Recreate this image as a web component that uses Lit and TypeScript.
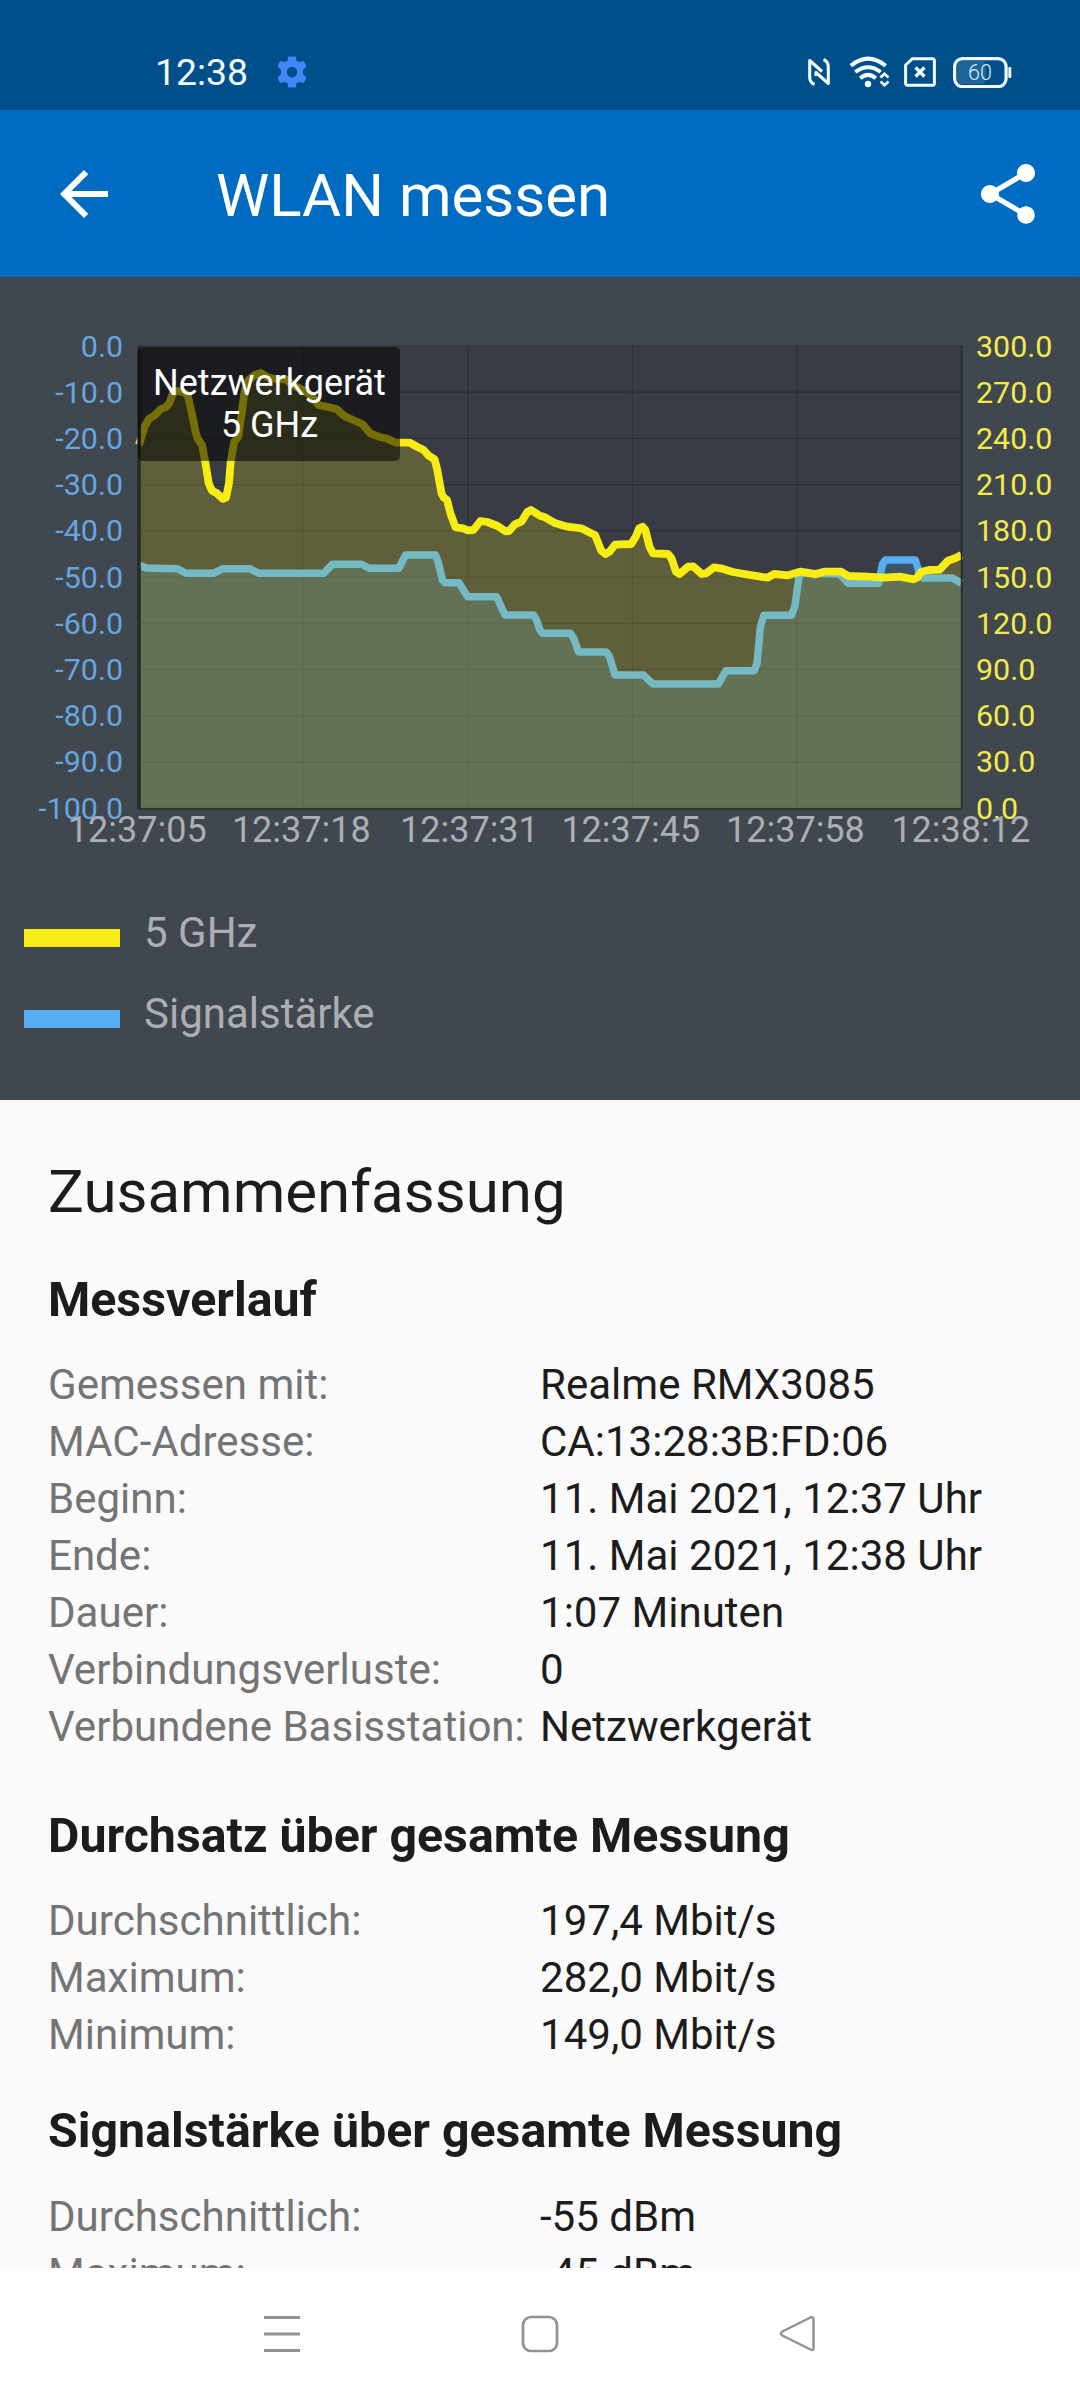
import { LitElement, html, svg, css } from "lit";
import { customElement, property } from "lit/decorators.js";

type Point = [number, number];

// Plot area inside the chart canvas (canvas starts below the app bar).
const PLOT = { left: 138, right: 962, top: 346, bottom: 808 };
const CANVAS = { top: 277, width: 1080, height: 623 };

const THROUGHPUT: Point[] = [
  [139, 445], [144.6, 426.7], [148.8, 419], [155, 415], [161, 409], [166, 407], [169.4, 403], [173, 393],
  [177, 391], [182.5, 391.7], [187.7, 395], [191.8, 413], [195.6, 431.7], [197.3, 438], [202, 445],
  [205.2, 461.7], [208.7, 483.3], [212, 490.7], [217, 493.3], [223, 499], [226, 497.7], [229, 483],
  [230.7, 461.7], [234.2, 441.7], [238.3, 436.7], [241.7, 413], [244.5, 391.7], [248.6, 380], [254.8, 375],
  [260.7, 373], [268.6, 377.7], [275.5, 379], [285.8, 379.3], [292.7, 385], [303, 390], [311.6, 395.7],
  [318.5, 405], [327, 406.7], [336.8, 409.3], [344.4, 416], [353, 420], [362.3, 424], [370.2, 433.3],
  [378.8, 436.7], [387.4, 438.7], [396, 442.7], [409.8, 442.7], [415.6, 446], [423.6, 450], [428.7, 455.7],
  [434.6, 459.3], [437.3, 470], [441.5, 493.3], [443.5, 497.3], [447, 500], [450.4, 513.3], [455.6, 527.3],
  [463.2, 528.3], [467.3, 530.3], [473.5, 530], [480.4, 521], [487.3, 522], [497.6, 526], [505.5, 531.3],
  [509, 531], [514.8, 524.3], [521.7, 521.3], [527.5, 511.7], [531, 510], [540, 515.7], [545, 517.3],
  [555.5, 523.3], [567.5, 526.7], [581.3, 528.3], [590, 532.7], [595, 535], [601.3, 550.7], [605.4, 554],
  [609.6, 551.7], [615, 544.7], [631.3, 544], [635.7, 536.7], [639.2, 528.3], [642.6, 526.7], [645.4, 530],
  [649.5, 546.7], [653, 553.3], [668, 554], [671.5, 558.3], [676, 571.7], [679.5, 574], [688, 566.7],
  [693.2, 566.3], [701.8, 574], [706, 573.3], [714, 567.3], [720.8, 568.3], [732.8, 572], [746.6, 574.3],
  [760.4, 576.7], [767.3, 577.7], [774.2, 574], [788, 575.3], [800, 571.7], [807, 572.7], [815.5, 574.3],
  [824, 571.7], [841.3, 571.7], [848.2, 576], [867, 576.7], [884.4, 577.7], [899.9, 576.7], [913.6, 579.3],
  [917, 577.7], [921.5, 571.7], [929, 570], [939.5, 569.7], [948, 560.7], [955, 558.3], [961.5, 555],
];

const SIGNAL: Point[] = [
  [139, 565], [146.3, 568], [177.3, 568.7], [186, 573.3], [213.5, 573.3], [223, 568.7], [249.7, 568.7],
  [259, 573.3], [323.7, 573.3], [332.3, 564.3], [361.6, 564.3], [369, 568.3], [398.8, 568.3], [405.6, 555],
  [435.6, 555], [438, 561.7], [442.5, 580], [445, 582.7], [459, 582.7], [467.6, 596.7], [496.6, 596.7],
  [505, 615], [533.7, 615], [536.5, 620], [540, 630], [542.8, 633.3], [570.3, 633.3], [573.7, 638.3],
  [578.6, 652], [606.5, 652], [609.6, 656.7], [615, 675], [643.3, 675], [653, 684], [718.4, 684],
  [726, 670.7], [754.2, 670.7], [757, 663.3], [760.4, 626.7], [763.8, 615.3], [791.4, 615.3],
  [794.8, 606.7], [799, 576.7], [802.4, 573.3], [839.6, 574], [848.2, 583.3], [878.5, 583.3], [882.6, 564],
  [885.4, 560], [915.3, 560], [920.5, 576.7], [924, 578], [952.5, 578], [961.5, 583.3],
];

// Each time label with the x coordinate at which it starts.
const TIMES: [string, number][] = [
  ["12:37:05", 67.8], ["12:37:18", 231.9], ["12:37:31", 400],
  ["12:37:45", 561.4], ["12:37:58", 726], ["12:38:12", 891.4],
];

const line = (pts: Point[]) => "M" + pts.map(([x, y]) => `${x} ${y}`).join("L");
const area = (pts: Point[]) =>
  `${line(pts)}L${PLOT.right - 0.5} ${PLOT.bottom}L${PLOT.left + 1} ${PLOT.bottom}Z`;

@customElement("status-bar")
class StatusBar extends LitElement {
  static styles = css`
    :host { display: flex; height: 110px; box-sizing: border-box; padding: 34px 68px 0 155px;
      background: #004e8a; color: #f2fbff; align-items: center; }
    .clock { font: 400 37.400px/44px Roboto, sans-serif; }
    .gear { margin-left: 28.500px; }
    .icons { margin-left: auto; display: flex; align-items: center; }
    svg { display: block; }
    .nfc { margin-right: 19px; }
    .wifi { margin-right: 14px; }
    .sim { margin-right: 17px; }
    .level { font: 300 21.500px Roboto, sans-serif; fill: #d8ecf8; }
  `;
  render() {
    return html`
      <span class="clock">12:38</span>
      <svg class="gear" width="30" height="32" viewBox="-15 -16 30 32">
        <path fill="#4285f4" fill-rule="evenodd" d="M-3.2-15.5H3.2Q4-15.500 4-14.700L4.300-11.500Q6-10.800 7.500-9.700L10.500-11Q11.500-11.300 12-10.500L14.300-6.300Q14.600-5.400 14-4.800L11-2.500Q11.300 0 11 2.500L14 4.800Q14.600 5.400 14.300 6.300L12 10.500Q11.500 11.300 10.500 11L7.500 9.700Q6 10.800 4.300 11.500L4 14.700Q4 15.500 3.200 15.500H-3.200Q-4 15.500-4 14.700L-4.300 11.500Q-6 10.800-7.500 9.700L-10.500 11Q-11.500 11.300-12 10.500L-14.300 6.300Q-14.600 5.400-14 4.800L-11 2.500Q-11.300 0-11-2.500L-14-4.800Q-14.600-5.400-14.300-6.300L-12-10.500Q-11.500-11.300-10.500-11L-7.500-9.700Q-6-10.800-4.300-11.500L-4-14.700Q-4-15.500-3.200-15.500ZM0-5.300A5.300 5.300 0 1 0 0 5.300A5.300 5.300 0 1 0 0-5.300Z"/>
      </svg>
      <div class="icons">
        <svg class="nfc" width="22" height="30" viewBox="0 0 22 30" fill="none" stroke="currentColor" stroke-width="3.100" stroke-linejoin="round">
          <path d="M6.500 27.500Q1.700 25.500 1.700 20V3.500L14 14.500"/>
          <path d="M15.500 2.500Q20.300 4.500 20.300 10V26.500L8 15.500V19"/>
        </svg>
        <svg class="wifi" width="41" height="32" viewBox="0 0 41 32" fill="none" stroke="currentColor" stroke-width="4">
          <path d="M1.800 9.700Q19-4.500 36.700 9.700"/>
          <path d="M6.300 16Q19 6.500 31.700 16"/>
          <path d="M11.200 22.200Q19 15.500 26.800 22.200"/>
          <circle cx="19" cy="28" r="3.200" fill="currentColor" stroke="none"/>
          <path stroke-width="2.800" d="M31.500 21.500L35.500 17.800L39.500 21.500M31.500 25.500L35.500 29.200L39.500 25.500"/>
        </svg>
        <svg class="sim" width="32" height="30" viewBox="0 0 32 30" fill="none" stroke="currentColor" stroke-width="3">
          <path stroke-linejoin="round" d="M8.500 1.700H28.500Q30.400 1.700 30.400 3.700V26.300Q30.400 28.300 28.500 28.300H3.500Q1.600 28.300 1.600 26.300V8Z"/>
          <path stroke-width="3.400" d="M11.500 10.500L20.500 19.500M20.500 10.500L11.500 19.500"/>
        </svg>
        <svg width="59" height="31" viewBox="0 0 59 31">
          <rect x="1.600" y="1.600" width="51.500" height="28" rx="8" fill="none" stroke="currentColor" stroke-width="3.200"/>
          <rect x="4" y="4" width="29" height="23" rx="5" fill="#fff" opacity=".12"/>
          <rect x="55.300" y="10" width="3" height="11" rx="1" fill="currentColor"/>
          <text class="level" x="27" y="23" text-anchor="middle">60</text>
        </svg>
      </div>`;
  }
}

@customElement("app-bar")
class AppBar extends LitElement {
  static styles = css`
    :host { display: flex; height: 167px; box-sizing: border-box; padding: 0 36px 0 48px;
      background: #006cc1; color: #fff; align-items: center; }
    svg { width: 72px; height: 72px; fill: currentColor; display: block; }
    .title { margin: 5px auto 0 96px; font: 400 60px/72px Roboto, sans-serif; }
  `;
  render() {
    return html`
      <svg viewBox="0 0 24 24"><path d="M20 11H7.830l5.590-5.590L12 4l-8 8 8 8 1.410-1.410L7.830 13H20v-2z"/></svg>
      <span class="title">WLAN messen</span>
      <svg viewBox="0 0 24 24"><path d="M18 16.080c-.76 0-1.440.3-1.960.77L8.910 12.700c.05-.23.09-.46.09-.7s-.04-.47-.09-.7l7.050-4.110c.54.5 1.250.81 2.040.81 1.660 0 3-1.340 3-3s-1.340-3-3-3-3 1.340-3 3c0 .24.04.47.09.7L8.040 9.810C7.500 9.310 6.790 9 6 9c-1.660 0-3 1.340-3 3s1.340 3 3 3c.79 0 1.500-.31 2.040-.81l7.120 4.160c-.05.21-.08.43-.08.65 0 1.610 1.310 2.920 2.920 2.920s2.920-1.310 2.920-2.920-1.310-2.920-2.920-2.920z"/></svg>`;
  }
}

@customElement("measure-chart")
class MeasureChart extends LitElement {
  static styles = css`
    :host { display: block; height: 823px; background: #40474f; font-family: Roboto, sans-serif; }
    .canvas { display: block; }
    .axis { font-size: 30.400px; }
    .signal { fill: #64a7e0; }
    .rate { fill: #f3ea4b; }
    .time { font-size: 36px; fill: #abaeb3; }
    .tip { font-size: 36px; fill: #fff; }
    .legend { display: flex; flex-direction: column; gap: 25px; padding: 5px 24px 0; }
    .item { display: flex; align-items: center; height: 56px; gap: 24px; color: #abaeb3; font-size: 42px; line-height: 56px; }
    .swatch { width: 96px; height: 18px; margin-top: 10px; }
    .yellow { background: #f7ec13; }
    .blue { background: #56adf2; }
  `;
  render() {
    const rows = Array.from({ length: 11 }, (_, i) => i);
    const stepY = (PLOT.bottom - PLOT.top) / 10;
    const stepX = (PLOT.right - PLOT.left) / 5;
    return html`
      <svg class="canvas" width=${CANVAS.width} height=${CANVAS.height}
        viewBox="0 ${CANVAS.top} ${CANVAS.width} ${CANVAS.height}">
        <rect x=${PLOT.left} y=${PLOT.top} width=${PLOT.right - PLOT.left} height=${PLOT.bottom - PLOT.top} fill="#3a3c45"/>
        <g stroke="#23292b" stroke-opacity=".6" stroke-width="1.200">
          ${rows.map((i) => svg`<path d="M${PLOT.left} ${PLOT.top + i * stepY}H${PLOT.right}"/>`)}
          ${TIMES.map((_, i) => svg`<path d="M${PLOT.left + i * stepX} ${PLOT.top}V${PLOT.bottom}"/>`)}
        </g>
        <path d=${area(SIGNAL)} fill="#56adf2" fill-opacity=".2"/>
        <path d=${line(SIGNAL)} fill="none" stroke="#56adf2" stroke-width="7.500" stroke-linejoin="round"/>
        <path d=${area(THROUGHPUT)} fill="#f7ec13" fill-opacity=".2"/>
        <path d=${line(THROUGHPUT)} fill="none" stroke="#f7ec13" stroke-width="7.800" stroke-linejoin="round"/>
        <path d="M139 ${PLOT.top}V${PLOT.bottom + 1}" stroke="#272c29" stroke-width="3.600"/>
        <path d="M138 ${PLOT.bottom + 1}H962" stroke="#2f3630" stroke-width="1.800"/>
        <path d="M961.600 ${PLOT.top}V${PLOT.bottom + 1}" stroke="#272c2e" stroke-width="1.600"/>
        ${rows.map((i) => svg`
          <text class="axis signal" x="123" y=${PLOT.top + i * stepY + 10.600} text-anchor="end">${i ? "-" : ""}${i * 10}.0</text>
          <text class="axis rate" x="976" y=${PLOT.top + i * stepY + 10.600}>${300 - i * 30}.0</text>`)}
        ${TIMES.map(([label, x]) => svg`<text class="time" x=${x} y="842">${label}</text>`)}
        <rect x="138" y="347" width="262" height="114" rx="5" fill="#000" fill-opacity=".53"/>
        <text class="tip" x="269.500" y="394.600" text-anchor="middle">Netzwerkgerät</text>
        <text class="tip" x="269.500" y="437" text-anchor="middle">5 GHz</text>
      </svg>
      <div class="legend">
        <div class="item"><i class="swatch yellow"></i><span>5 GHz</span></div>
        <div class="item"><i class="swatch blue"></i><span>Signalstärke</span></div>
      </div>`;
  }
}

@customElement("fact-section")
class FactSection extends LitElement {
  @property() heading = "";
  @property({ attribute: false }) rows: [string, string][] = [];
  static styles = css`
    :host { display: block; }
    .heading { margin: 0 0 28.400px; font: 700 48.300px/56px Roboto, sans-serif; color: #1c1c1c; white-space: nowrap; }
    .row { display: grid; grid-template-columns: 492px 1fr; font-size: 42.050px; line-height: 57.100px; white-space: nowrap; }
    .key { color: #747474; }
    .value { color: #1c1c1c; }
  `;
  render() {
    return html`
      <h2 class="heading">${this.heading}</h2>
      ${this.rows.map(([k, v]) => html`
        <div class="row"><span class="key">${k}</span><span class="value">${v}</span></div>`)}`;
  }
}

@customElement("nav-bar")
class NavBar extends LitElement {
  static styles = css`
    :host { display: flex; height: 132px; background: #fff; box-sizing: border-box;
      padding: 47px 263px 0; justify-content: space-between; align-items: flex-start; }
    svg { display: block; fill: none; stroke: #929292; stroke-width: 3; }
  `;
  render() {
    return html`
      <svg width="38" height="38" viewBox="0 0 38 38"><path d="M1 2.500H37M1 19H37M1 35.500H37"/></svg>
      <svg width="38" height="38" viewBox="0 0 38 38"><rect stroke-width="2.700" x="2" y="2" width="34" height="34" rx="8"/></svg>
      <svg width="38" height="38" viewBox="0 0 38 38"><path stroke-width="2.500" stroke-linejoin="round" d="M3.300 16.500L31.500 2.500Q34.500 1.500 34.500 4.500V33Q34.500 36 31.500 34.500L3.300 20.500Q.5 18.500 3.300 16.500Z"/></svg>`;
  }
}

@customElement("app-root")
class AppRoot extends LitElement {
  static styles = css`
    :host { display: flex; flex-direction: column; width: 1080px; height: 2400px; overflow: hidden;
      background: #fafafa; font-family: Roboto, sans-serif; }
    .content { flex: 1; min-height: 0; overflow: hidden; box-sizing: border-box; padding: 56.500px 48px 0; }
    .headline { margin: 0 0 45px; font: 400 60px/70px Roboto, sans-serif; color: #1c1c1c; }
    .history { margin-bottom: 52px; }
    .rate { margin-bottom: 40px; }
  `;
  render() {
    return html`
      <status-bar></status-bar>
      <app-bar></app-bar>
      <measure-chart></measure-chart>
      <main class="content">
        <h1 class="headline">Zusammenfassung</h1>
        <fact-section class="history" heading="Messverlauf" .rows=${[
          ["Gemessen mit:", "Realme RMX3085"],
          ["MAC-Adresse:", "CA:13:28:3B:FD:06"],
          ["Beginn:", "11. Mai 2021, 12:37 Uhr"],
          ["Ende:", "11. Mai 2021, 12:38 Uhr"],
          ["Dauer:", "1:07 Minuten"],
          ["Verbindungsverluste:", "0"],
          ["Verbundene Basisstation:", "Netzwerkgerät"],
        ]}></fact-section>
        <fact-section class="rate" heading="Durchsatz über gesamte Messung" .rows=${[
          ["Durchschnittlich:", "197,4 Mbit/s"],
          ["Maximum:", "282,0 Mbit/s"],
          ["Minimum:", "149,0 Mbit/s"],
        ]}></fact-section>
        <fact-section heading="Signalstärke über gesamte Messung" .rows=${[
          ["Durchschnittlich:", "-55 dBm"],
          ["Maximum:", "-45 dBm"],
        ]}></fact-section>
      </main>
      <nav-bar></nav-bar>`;
  }
}
